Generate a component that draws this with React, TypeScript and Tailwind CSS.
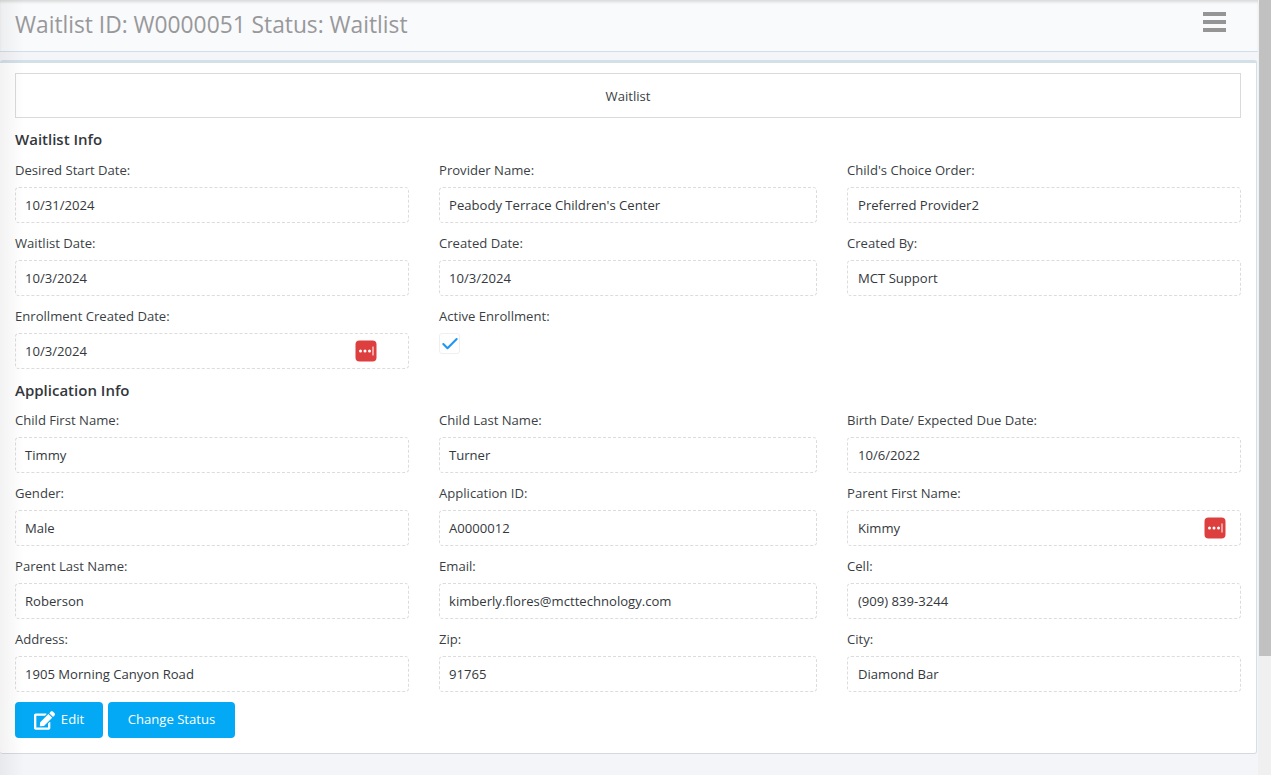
import { Check } from "lucide-react";
import { FaEdit } from "react-icons/fa";

type FieldProps = {
  label: string;
  value: string;
  dotsClass?: string;
  last?: boolean;
};

const Dots = ({ className }: { className: string }) => (
  <svg width="22" height="22" viewBox="0 0 22 22" className={"absolute top-[6px] " + className}>
    <rect x="0.5" y="0.5" width="21" height="21" rx="4" fill="#dc3f3d" />
    <circle cx="5.5" cy="11" r="1.5" fill="#fff" />
    <circle cx="10" cy="11" r="1.5" fill="#fff" />
    <circle cx="14.5" cy="11" r="1.5" fill="#fff" />
    <rect x="17.5" y="6.5" width="1" height="9" fill="#fff" />
  </svg>
);

function Field({ label, value, dotsClass, last }: FieldProps) {
  return (
    <div className="h-[73px]">
      <div className="h-[30px] pt-[3px] leading-[20px] text-[#3b3f45]">{label}</div>
      <div className={"relative flex h-[36px] items-center rounded-[4px] border border-dashed border-[#dcdcdc] pt-[1px] text-[#34383d] " + (last ? "px-[10px]" : "px-[9px]")}>
        {value}
        {dotsClass && <Dots className={dotsClass} />}
      </div>
    </div>
  );
}

export default function App() {
  return (
    <div className="relative flex h-[775px] w-full overflow-hidden bg-[#f4f5f9] font-['Open_Sans',sans-serif] text-[13.1px]">
      <div className="w-[1258px] shrink-0">
        <header className="flex h-[52px] items-center justify-between border-b border-[#d3dee8] bg-[#f9fafc] pl-[15px] pr-[32px] shadow-[inset_0_3px_3px_-1px_#d9d9d9]">
          <h1 className="mb-[2px] text-[22.75px] leading-[48px] text-[#98989a]">Waitlist ID: W0000051 Status: Waitlist</h1>
          <div className="mb-[7px] flex w-[23px] flex-col gap-[4px]">
            <span className="h-[4px] bg-[#959595]" />
            <span className="h-[4px] bg-[#959595]" />
            <span className="h-[4px] bg-[#959595]" />
          </div>
        </header>

        <main className="mt-[8px] h-[694px] w-[1257px] rounded-[3px] border-r border-b border-t-[3px] border-[#d3e0e8] border-b-[#d5d9de] bg-white pl-[15px] pr-[15px] pt-[10px]">
          <div className="flex h-[45px] w-[1226px] items-center justify-center border border-[#dadada] pt-[2px] text-[#3b3f45]">Waitlist</div>

          <h2 className="mt-[10px] h-[29px] text-[15px] font-semibold leading-[23px] text-[#33373c]">Waitlist Info</h2>
          <div className="grid grid-cols-[394px_378px_394px] gap-x-[30px]">
            <Field label="Desired Start Date:" value="10/31/2024" />
            <Field label="Provider Name:" value="Peabody Terrace Children's Center" />
            <Field label="Child's Choice Order:" value="Preferred Provider2" last />
            <Field label="Waitlist Date:" value="10/3/2024" />
            <Field label="Created Date:" value="10/3/2024" />
            <Field label="Created By:" value="MCT Support" last />
            <Field label="Enrollment Created Date:" value="10/3/2024" dotsClass="right-[31px]" />
            <div className="h-[73px]">
              <div className="h-[30px] pt-[3px] leading-[20px] text-[#3b3f45]">Active Enrollment:</div>
              <div className="flex h-[21px] w-[21px] items-center justify-center rounded-[3px] border border-[#efefef]">
                <Check size={20} strokeWidth={2.5} color="#2196f3" className="shrink-0" />
              </div>
            </div>
          </div>

          <h2 className="mt-[3px] h-[28px] text-[15px] font-semibold leading-[23px] text-[#33373c]">Application Info</h2>
          <div className="grid grid-cols-[394px_378px_394px] gap-x-[30px]">
            <Field label="Child First Name:" value="Timmy" />
            <Field label="Child Last Name:" value="Turner" />
            <Field label="Birth Date/ Expected Due Date:" value="10/6/2022" last />
            <Field label="Gender:" value="Male" />
            <Field label="Application ID:" value="A0000012" />
            <Field label="Parent First Name:" value="Kimmy" dotsClass="right-[14px]" last />
            <Field label="Parent Last Name:" value="Roberson" />
            <Field label="Email:" value="kimberly.flores@mcttechnology.com" />
            <Field label="Cell:" value="(909) 839-3244" last />
            <Field label="Address:" value="1905 Morning Canyon Road" />
            <Field label="Zip:" value="91765" />
            <Field label="City:" value="Diamond Bar" last />
          </div>

          <div className="mt-[3px] flex gap-[5px]">
            <button className="flex h-[36px] w-[88px] items-center justify-center gap-[6px] rounded-[4px] bg-[#03a9f4] text-white">
              <FaEdit size={21} />
              Edit
            </button>
            <button className="h-[36px] w-[127px] rounded-[4px] bg-[#03a9f4] text-white">Change Status</button>
          </div>
        </main>
      </div>

      <div className="w-[13px] shrink-0 bg-[#f0f0f0]">
        <div className="ml-[1px] h-[656px] w-[12px] bg-[#c1c1c1]" />
      </div>

      <div className="pointer-events-none absolute bottom-0 left-0 top-0 w-[24px] bg-gradient-to-r from-black/5 to-transparent" />
    </div>
  );
}
